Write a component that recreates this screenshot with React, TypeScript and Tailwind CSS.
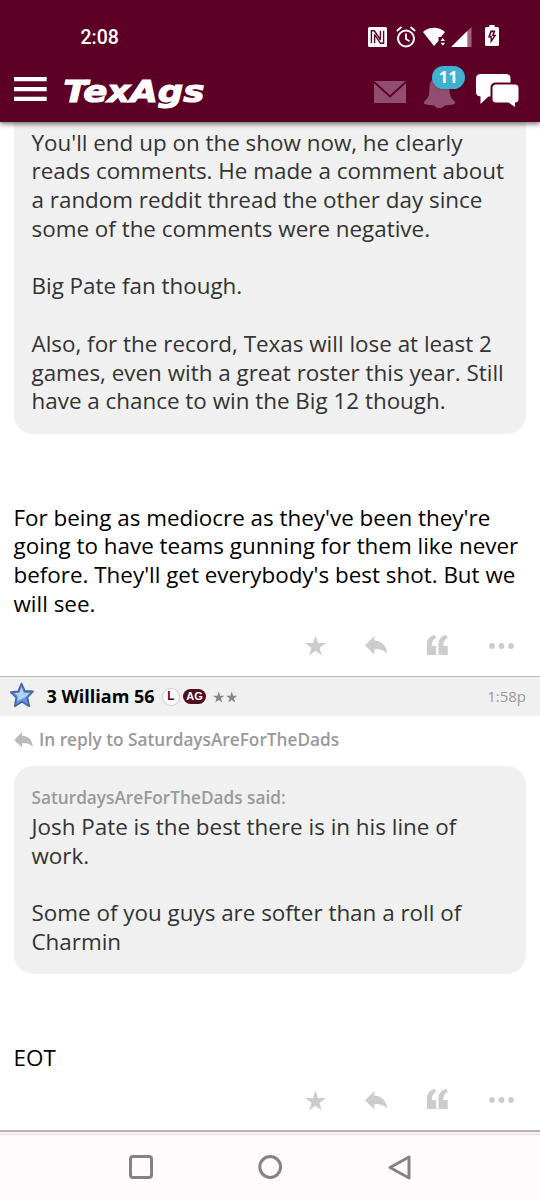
import React from "react";

type LineProps = { children?: React.ReactNode };

function Line({ children }: LineProps) {
  return <div className="h-[28.75px] whitespace-nowrap">{children}</div>;
}

function ReplyIcon({ className }: { className: string }) {
  return (
    <svg viewBox="0 0 22 19" className={className} fill="currentColor">
      <path d="M9.3 0v4.600C16 4.800 21.500 9 22 17.600C18.500 13.800 14.500 12.900 9.300 13v5.400L0 9.400z" />
    </svg>
  );
}

function Star({ className }: { className: string }) {
  return (
    <svg viewBox="0 0 22 21" className={className} fill="currentColor">
      <path d="M11 0l2.600 8H22l-6.800 5 2.600 8-6.800-5-6.800 5 2.600-8L0 8h8.400z" />
    </svg>
  );
}

function Actions() {
  return (
    <div className="flex h-[22px] items-center pl-[305px] text-[#cccccc]">
      <Star className="h-[21px] w-[21px]" />
      <ReplyIcon className="ml-[39px] h-[19px] w-[22px]" />
      <svg viewBox="0 0 21 20" className="ml-[40px] -mt-[2px] h-[20px] w-[21px]" fill="currentColor">
        <path d="M0 20V9C0 4 3 .8 7.800 0L9.200 3C6.500 4 5 6 4.800 11H9.200V20zM11.500 20V9C11.500 4 14.500 .8 19.300 0L20.700 3C18 4 16.500 6 16.300 11H20.700V20z" />
      </svg>
      <svg viewBox="0 0 26 6" className="ml-[41px] h-[6px] w-[26px]" fill="currentColor">
        <circle cx="3" cy="3" r="2.900" />
        <circle cx="12.500" cy="3" r="2.900" />
        <circle cx="22" cy="3" r="2.900" />
      </svg>
    </div>
  );
}

function StatusBar() {
  return (
    <div className="flex h-[73px] items-center pl-[80.500px] text-white">
      <span className="w-[287.500px] pt-[2px] font-['Roboto',sans-serif] text-[19.500px] font-medium leading-[24px]">2:08</span>
      <svg viewBox="0 0 19 20" className="h-[20px] w-[19px]">
        <rect width="19" height="20" rx="1.500" fill="#fff" />
        <path d="M3.400 16V3.800H6.300L12.600 13M6.600 7.200V16.300M12.400 3.800V11.500M15.600 3.800V16.300H12.600L6.600 7.600" fill="none" stroke="#5c0025" strokeWidth="1.400" />
      </svg>
      <svg viewBox="0 0 20 22" className="ml-[9px] h-[22px] w-[20px]" fill="none" stroke="#fff" strokeWidth="2">
        <circle cx="10" cy="12.500" r="8" />
        <path d="M.8 5L5.500 1M19.200 5L14.500 1M10 7.500v5.500l3.500 2.300" strokeWidth="1.800" />
      </svg>
      <svg viewBox="0 0 23 20" className="ml-[7px] h-[20px] w-[23px]" fill="#fff">
        <path d="M0 5C6.500-.6 15.500-.6 22 5L18 10h-2.500v4L11 19z" />
        <path d="M17.500 14h4.600l-2.300-3zM17.500 15.800h4.600l-2.300 3z" />
      </svg>
      <svg viewBox="0 0 21 20" className="ml-[5px] h-[20px] w-[21px]" fill="#fff">
        <path d="M0 20L16.500 3.800V20z" />
        <path d="M16.500 3.800L20.500 0V20H16.500z" opacity=".4" />
      </svg>
      <svg viewBox="0 0 14 21" className="ml-[13px] -mt-[2px] h-[21px] w-[14px]">
        <path d="M4.300 0h5.400v2H12.500Q14 2 14 3.500V19.500Q14 21 12.500 21h-11Q0 21 0 19.500V3.500Q0 2 1.500 2H4.300z" fill="#fff" />
        <path d="M5.500 5.500h5l-1.500 4.200H11.500L5.500 18.500v-6H3z" fill="#5c0025" />
        <path d="M6.600 7.200h1.600l-1.300 3.900h1.900l-2 3v-3H5.200z" fill="#fff" />
      </svg>
    </div>
  );
}

function TopBar() {
  return (
    <div className="flex h-[49px] items-start pl-[14px] text-white">
      <svg viewBox="0 0 33 25" className="mt-[4px] h-[25px] w-[33px]" fill="#fff">
        <path d="M0 0H32.700V4.300H0zM0 9.900H32.700V14.200H0zM0 19.700H32.700V24H0z" />
      </svg>
      <svg viewBox="0 0 145 42" className="ml-[16px] h-[42px] w-[145px]" fill="#fff" stroke="#fff" strokeWidth="1.100">
        <text x="0.500" y="28.800" textLength="141" lengthAdjust="spacingAndGlyphs" className="font-['DejaVu_Sans',sans-serif] text-[31px] font-bold italic">TexAgs</text>
        <path d="M3 6.300L1.800 11.200H3.400L5.800 9.500zM24.300 6.500L22.600 12.500H20.800L21 9z" strokeWidth=".3" />
      </svg>
      <svg viewBox="0 0 32 22" className="ml-[166px] mt-[8px] h-[22px] w-[32px]">
        <rect width="32" height="22" fill="#914e71" />
        <path d="M0 1L16 15.500L32 1" fill="none" stroke="#5c0025" strokeWidth="2" />
      </svg>
      <div className="relative ml-[17px] h-[36px] w-[33px]">
        <svg viewBox="0 0 33 36" className="h-[36px] w-[33px]" fill="#914e71">
          <path d="M16.500 3C9.500 4 6.500 9 6.500 15C6.500 22 5.500 25 .8 29C.8 31.500 3 32 11.500 32.500C13 36 20 36 21.500 32.500C30 32 32.200 31.500 32.200 29C27.500 25 26.500 22 26.500 15C26.500 9 23.500 4 16.500 3z" />
        </svg>
        <div className="absolute -top-[7px] left-[9px] flex h-[23px] w-[32.500px] items-center justify-center rounded-full bg-[#40b0d0] font-['Open_Sans',sans-serif] text-[16.500px] font-bold shadow">11</div>
      </div>
      <svg viewBox="0 0 43 35" className="ml-[20px] h-[35px] w-[43px]" fill="#fff">
        <path d="M5 1H30Q34.500 1 34.500 5.500V19Q34.500 23.500 30 23.500H12.500L4.500 31V23.500Q0 23 0 19V5.500Q0 1 5 1z" />
        <path d="M20 11.500H39Q42.500 11.500 42.500 15V26Q42.500 29.500 39 29.500V34L32.500 29.500H20Q16.500 29.500 16.500 26V15Q16.500 11.500 20 11.500z" stroke="#5c0025" strokeWidth="4" />
        <path d="M20 11.500H39Q42.500 11.500 42.500 15V26Q42.500 29.500 39 29.500V34L32.500 29.500H20Q16.500 29.500 16.500 26V15Q16.500 11.500 20 11.500z" />
      </svg>
    </div>
  );
}

export default function App() {
  return (
    <div className="flex h-[1200px] w-[540px] flex-col overflow-hidden bg-white font-['Open_Sans',sans-serif] text-[22.420px] leading-[28.75px] text-black">
      <header className="z-10 h-[122px] shrink-0 bg-[#5c0025] shadow-[0_2px_5px_rgba(0,0,0,0.55)]">
        <StatusBar />
        <TopBar />
      </header>

      <main className="h-[1013px] shrink-0">
        <article className="h-[554px]">
          <div className="ml-[13.500px] mr-[14px] h-[311.500px] rounded-b-[19px] bg-[#f0f0f0] pl-[18px] pt-[6.500px] text-[#333333]">
            <Line>You'll end up on the show now, he clearly</Line>
            <Line>reads comments. He made a comment about</Line>
            <Line>a random reddit thread the other day since</Line>
            <Line>some of the comments were negative.</Line>
            <Line />
            <Line>Big Pate fan though.</Line>
            <Line />
            <Line>Also, for the record, Texas will lose at least 2</Line>
            <Line>games, even with a great roster this year. Still</Line>
            <Line>have a chance to win the Big 12 though.</Line>
          </div>
          <div className="mb-[16px] ml-[13.500px] mt-[70px]">
            <Line>For being as mediocre as they've been they're</Line>
            <Line>going to have teams gunning for them like never</Line>
            <Line>before. They'll get everybody's best shot. But we</Line>
            <Line>will see.</Line>
          </div>
          <Actions />
        </article>

        <article className="h-[454px] border-t border-[#b8b8b8]">
          <div className="flex h-[39px] items-center bg-[#f0f0f0] pl-[9px] pr-[14px]">
            <svg viewBox="0 0 26 26" className="-mt-[3px] h-[26px] w-[26px]">
              <path d="M12.500 1.500l3.300 7.500 8.200.5-5.700 6 2 8.700-7.300-4.500-7.200 4.500 1.500-8.500-5.500-5.500 7.500-.8z" fill="#6597dc" stroke="#48659f" strokeWidth="1.800" strokeLinejoin="round" />
              <path d="M12.600 5l2.300 6 5.600.3-4.500 4.200-7.800 3.500.8-5-3.500-2.800 5-.4z" fill="#b0d2f6" />
            </svg>
            <span className="ml-[11.500px] w-[108.500px] whitespace-nowrap pb-[1px] text-[18px] font-bold">3 William 56</span>
            <span className="ml-[7px] flex h-[18px] w-[18px] items-center justify-center rounded-full border border-[#ccc] bg-white font-['Liberation_Sans',sans-serif] text-[12px] font-bold text-[#5c0025]">L</span>
            <span className="ml-[3px] flex h-[15px] w-[23px] items-center justify-center rounded-full bg-[#500d20] font-['Liberation_Sans',sans-serif] text-[11px] font-bold text-white">AG</span>
            <Star className="ml-[7px] h-[12px] w-[11.500px] text-[#858585]" />
            <Star className="ml-[1px] h-[12px] w-[11.500px] text-[#858585]" />
            <span className="ml-auto pb-[1px] text-[15px] text-[#999]">1:58p</span>
          </div>
          <div className="flex h-[50px] items-center pb-[2px] pl-[14px] text-[#999]">
            <ReplyIcon className="-mt-[1px] h-[16px] w-[19px] text-[#bbbbbb]" />
            <span className="ml-[6px] whitespace-nowrap text-[17.230px] font-semibold">In reply to SaturdaysAreForTheDads</span>
          </div>
          <div className="ml-[13.500px] mr-[14px] h-[208px] rounded-[19px] bg-[#f0f0f0] pl-[18px] pt-[18.250px] text-[#333333]">
            <div className="h-[28.75px] whitespace-nowrap text-[17.230px] font-semibold text-[#999]">SaturdaysAreForTheDads said:</div>
            <Line>Josh Pate is the best there is in his line of</Line>
            <Line>work.</Line>
            <Line />
            <Line>Some of you guys are softer than a roll of</Line>
            <Line>Charmin</Line>
          </div>
          <div className="mb-[16.500px] ml-[13.500px] mt-[70px]">
            <Line>EOT</Line>
          </div>
          <Actions />
        </article>
        <div className="h-[5px] border-b border-t-2 border-b-[#efdcd8] border-t-[#b4b1b9] bg-[#f6f2f4]" />
      </main>

      <nav className="flex grow items-center bg-[#fffafb] pb-[1px] pl-[129px]">
        <svg viewBox="0 0 24 24" className="h-[24px] w-[24px]" fill="none" stroke="#858285" strokeWidth="3">
          <rect x="1.500" y="1.500" width="21" height="21" rx="2.500" />
        </svg>
        <svg viewBox="0 0 24 24" className="ml-[105px] h-[24px] w-[24px]" fill="none" stroke="#858285" strokeWidth="3">
          <circle cx="12.200" cy="12" r="10.400" />
        </svg>
        <svg viewBox="0 0 23 25" className="ml-[106px] h-[25px] w-[23px]" fill="none" stroke="#858285" strokeWidth="3" strokeLinejoin="round">
          <path d="M2 12.500L21 2V23z" />
        </svg>
      </nav>
    </div>
  );
}
